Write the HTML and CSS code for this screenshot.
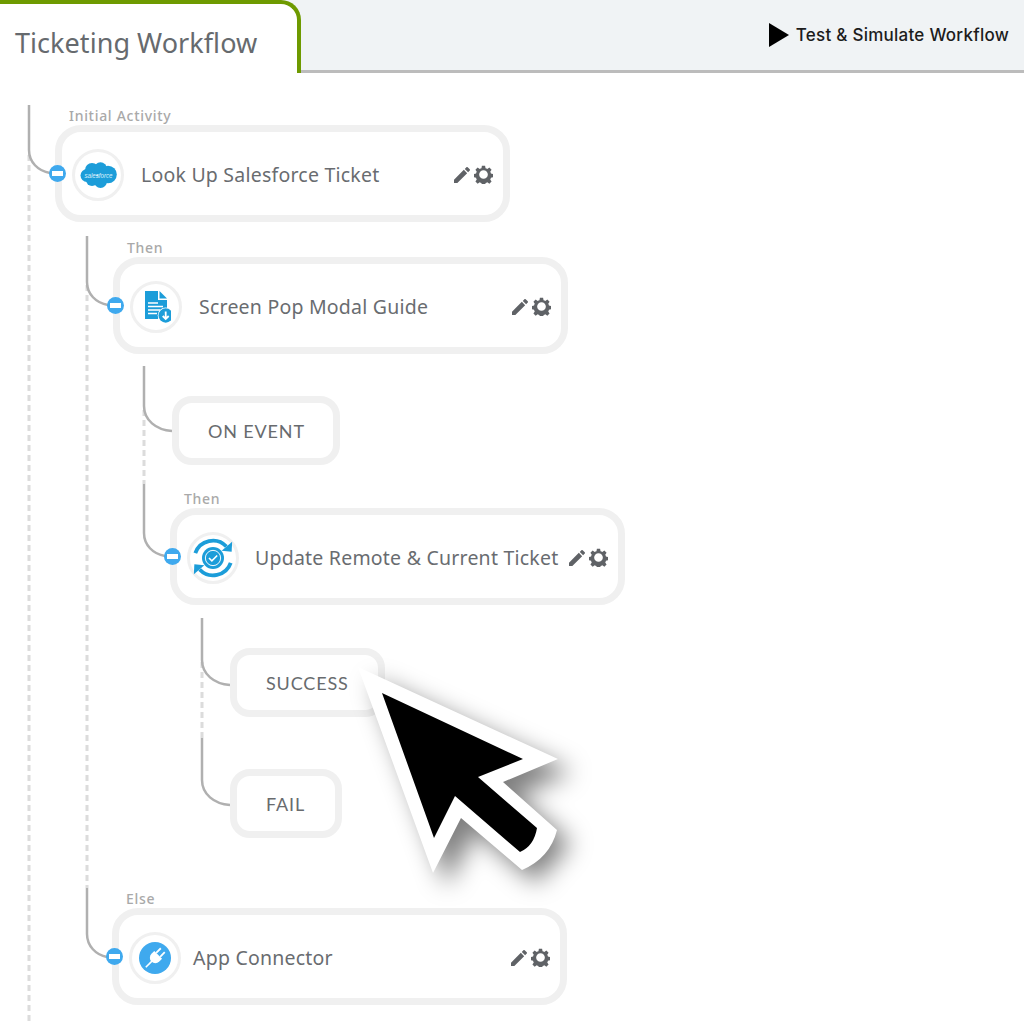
FILE: index.html
```html
<!DOCTYPE html>
<html lang="en">
<head>
<meta charset="utf-8">
<title>Ticketing Workflow</title>
<link rel="stylesheet" href="styles.css">
</head>
<body>
<div class="page">
  <header class="topbar">
    <div class="tab">Ticketing Workflow</div>
    <div class="test-action">
      <svg class="play" viewBox="0 0 20 24"><polygon points="0,0 20,12 0,24"/></svg>
      <span>Test &amp; Simulate Workflow</span>
    </div>
  </header>

  <main class="tree">
    <div class="step at-55">
      <div class="step-label">Initial Activity</div>
      <div class="node">
        <span class="minus"></span>
        <span class="icon-ring">
          <svg viewBox="0 0 37 26" class="icon-sf"><g fill="#1c9dd9"><circle cx="7" cy="13.500" r="6.500"/><circle cx="12" cy="8" r="7"/><circle cx="20.500" cy="6.800" r="6.500"/><circle cx="28" cy="12.500" r="8.800"/><circle cx="12" cy="18" r="6"/><circle cx="20.500" cy="19.500" r="6.500"/></g><text x="18.500" y="15.500" class="sf-word" text-anchor="middle" textLength="28" lengthAdjust="spacingAndGlyphs">salesforce</text></svg>
        </span>
        <span class="node-title">Look Up Salesforce Ticket</span>
        <span class="node-actions">
          <svg class="pencil" viewBox="3 3 18 18"><path d="M3 17.250V21h3.750L17.810 9.940l-3.750-3.750L3 17.250zM20.710 7.040a1 1 0 0 0 0-1.410l-2.340-2.340a1 1 0 0 0-1.410 0l-1.830 1.830 3.750 3.750 1.830-1.830z"/></svg>
          <svg class="gear" viewBox="0 0 24 24"><path fill-rule="evenodd" d="M10 1h4l.6 3a8.300 8.300 0 0 1 2.200.9l2.600-1.700 2.800 2.800-1.700 2.600c.4.700.7 1.400.9 2.200l3 .6v4l-3 .6a8.300 8.300 0 0 1-.9 2.200l1.700 2.600-2.800 2.800-2.600-1.700a8.300 8.300 0 0 1-2.200.9l-.6 3h-4l-.6-3a8.300 8.300 0 0 1-2.200-.9l-2.600 1.700-2.800-2.800 1.700-2.600a8.300 8.300 0 0 1-.9-2.200l-3-.6v-4l3-.6c.2-.8.500-1.500.9-2.200L1.800 6l2.800-2.800 2.600 1.700a8.300 8.300 0 0 1 2.200-.9zM12 6.500a5.500 5.500 0 1 0 0 11 5.500 5.500 0 0 0 0-11z"/></svg>
        </span>
      </div>
    </div>

    <div class="step at-113 gap-15">
      <div class="step-label">Then</div>
      <div class="node">
        <span class="minus"></span>
        <span class="icon-ring">
          <svg viewBox="-3 0 30 34" class="icon-doc"><path fill="#1c9dd9" d="M1 1h13v9h9v14a8 8 0 0 0-9 5H1z"/><path fill="#1c9dd9" d="M15.500 1l7.500 7.500h-7.500z"/><path fill="none" stroke="#fff" stroke-width="1.400" d="M4 13h10M4 16.500h15M4 20h12M4 23.500h9"/><circle cx="21.700" cy="25.500" r="8" fill="#fff"/><circle cx="21.700" cy="25.500" r="7.200" fill="#1c9dd9"/><path fill="none" stroke="#fff" stroke-width="1.800" d="M21.700 21.500v7M18.700 26l3 3 3-3"/></svg>
        </span>
        <span class="node-title">Screen Pop Modal Guide</span>
        <span class="node-actions">
          <svg class="pencil" viewBox="3 3 18 18"><path d="M3 17.250V21h3.750L17.810 9.940l-3.750-3.750L3 17.250zM20.710 7.040a1 1 0 0 0 0-1.410l-2.340-2.340a1 1 0 0 0-1.410 0l-1.830 1.830 3.750 3.750 1.830-1.830z"/></svg>
          <svg class="gear" viewBox="0 0 24 24"><path fill-rule="evenodd" d="M10 1h4l.6 3a8.300 8.300 0 0 1 2.200.9l2.600-1.700 2.800 2.800-1.700 2.600c.4.700.7 1.400.9 2.200l3 .6v4l-3 .6a8.300 8.300 0 0 1-.9 2.200l1.700 2.600-2.800 2.800-2.600-1.700a8.300 8.300 0 0 1-2.200.9l-.6 3h-4l-.6-3a8.300 8.300 0 0 1-2.200-.9l-2.600 1.700-2.800-2.800 1.700-2.600a8.300 8.300 0 0 1-.9-2.200l-3-.6v-4l3-.6c.2-.8.500-1.500.9-2.200L1.800 6l2.800-2.800 2.600 1.700a8.300 8.300 0 0 1 2.200-.9zM12 6.500a5.500 5.500 0 1 0 0 11 5.500 5.500 0 0 0 0-11z"/></svg>
        </span>
      </div>
    </div>

    <div class="branch branch-on-event gap-42">ON EVENT</div>

    <div class="step at-170 gap-23">
      <div class="step-label">Then</div>
      <div class="node node-snug">
        <span class="minus"></span>
        <span class="icon-ring">
          <svg viewBox="0 0 46 46" class="icon-sync">
            <path fill="none" stroke="#1c9dd9" stroke-width="4" d="M4.500 18A19.500 19.500 0 0 1 37 11"/>
            <path fill="#1c9dd9" d="M32 15.500l10.500 1 .5-10.500z"/>
            <path fill="none" stroke="#1c9dd9" stroke-width="4" d="M41.500 28A19.500 19.500 0 0 1 9 35"/>
            <path fill="#1c9dd9" d="M14 30.500l-10.500-1L3 40z"/>
            <circle cx="23" cy="23" r="11.500" fill="#1c9dd9"/>
            <circle cx="23" cy="23" r="8" fill="none" stroke="#fff" stroke-width="1"/>
            <path fill="none" stroke="#fff" stroke-width="1.600" d="M18.800 23l3 3 5.600-5.600"/>
          </svg>
        </span>
        <span class="node-title">Update Remote &amp; Current Ticket</span>
        <span class="node-actions">
          <svg class="pencil" viewBox="3 3 18 18"><path d="M3 17.250V21h3.750L17.810 9.940l-3.750-3.750L3 17.250zM20.710 7.040a1 1 0 0 0 0-1.410l-2.340-2.340a1 1 0 0 0-1.410 0l-1.830 1.830 3.750 3.750 1.830-1.830z"/></svg>
          <svg class="gear" viewBox="0 0 24 24"><path fill-rule="evenodd" d="M10 1h4l.6 3a8.300 8.300 0 0 1 2.200.9l2.600-1.700 2.800 2.800-1.700 2.600c.4.700.7 1.400.9 2.200l3 .6v4l-3 .6a8.300 8.300 0 0 1-.9 2.200l1.700 2.600-2.800 2.800-2.600-1.700a8.300 8.300 0 0 1-2.200.9l-.6 3h-4l-.6-3a8.300 8.300 0 0 1-2.200-.9l-2.600 1.700-2.800-2.800 1.700-2.600a8.300 8.300 0 0 1-.9-2.200l-3-.6v-4l3-.6c.2-.8.500-1.500.9-2.200L1.800 6l2.800-2.800 2.600 1.700a8.300 8.300 0 0 1 2.200-.9zM12 6.500a5.500 5.500 0 1 0 0 11 5.500 5.500 0 0 0 0-11z"/></svg>
        </span>
      </div>
    </div>

    <div class="branch branch-success gap-43">SUCCESS</div>
    <div class="branch branch-fail gap-52">FAIL</div>

    <div class="step at-112 gap-50">
      <div class="step-label">Else</div>
      <div class="node node-tight">
        <span class="minus"></span>
        <span class="icon-ring">
          <svg viewBox="0 0 32 32" class="icon-plug"><circle cx="16" cy="16" r="16" fill="#3fa9ee"/><g transform="rotate(45 16 16)" fill="#fff"><rect x="12.300" y="5" width="1.800" height="6.500"/><rect x="17.900" y="5" width="1.800" height="6.500"/><path d="M10.500 11.500h11v4a5.500 5.500 0 0 1-11 0z"/><rect x="15.200" y="20" width="1.600" height="9"/></g></svg>
        </span>
        <span class="node-title">App Connector</span>
        <span class="node-actions">
          <svg class="pencil" viewBox="3 3 18 18"><path d="M3 17.250V21h3.750L17.810 9.940l-3.750-3.750L3 17.250zM20.710 7.040a1 1 0 0 0 0-1.410l-2.340-2.340a1 1 0 0 0-1.410 0l-1.830 1.830 3.750 3.750 1.830-1.830z"/></svg>
          <svg class="gear" viewBox="0 0 24 24"><path fill-rule="evenodd" d="M10 1h4l.6 3a8.300 8.300 0 0 1 2.200.9l2.600-1.700 2.800 2.800-1.700 2.600c.4.700.7 1.400.9 2.200l3 .6v4l-3 .6a8.300 8.300 0 0 1-.9 2.200l1.700 2.600-2.800 2.800-2.600-1.700a8.300 8.300 0 0 1-2.200.9l-.6 3h-4l-.6-3a8.300 8.300 0 0 1-2.200-.9l-2.600 1.700-2.800-2.800 1.700-2.600a8.300 8.300 0 0 1-.9-2.200l-3-.6v-4l3-.6c.2-.8.500-1.500.9-2.200L1.800 6l2.800-2.800 2.600 1.700a8.300 8.300 0 0 1 2.200-.9zM12 6.500a5.500 5.500 0 1 0 0 11 5.500 5.500 0 0 0 0-11z"/></svg>
        </span>
      </div>
    </div>
  </main>

  <svg class="connectors" viewBox="0 0 1024 1024">
    <g class="dash">
      <path d="M29 155V1024"/>
      <path d="M87 285V888"/>
      <path d="M144 410V484"/>
      <path d="M202 662V738"/>
    </g>
    <g class="solid">
      <path d="M29 105V150C29 162 38 171 50 173"/>
      <path d="M87 236V282C87 294 96 303 108 305"/>
      <path d="M87 888V934C87 946 96 955 107 957"/>
      <path d="M144 366V406C144 420 156 430 172 431"/>
      <path d="M144 484V533C144 545 153 554 165 556"/>
      <path d="M202 618V660C202 674 214 684 230 685"/>
      <path d="M202 738V780C202 794 214 804 230 805"/>
    </g>
  </svg>

  <svg class="cursor" viewBox="0 0 1024 1024">
    <defs>
      <filter id="cursor-shadow" x="-30%" y="-30%" width="170%" height="170%">
        <feGaussianBlur stdDeviation="12"/>
      </filter>
    </defs>
    <polygon class="cursor-shadow" filter="url(#cursor-shadow)" points="372,680 572,772 517,795 571,843 536,883 475,831 447,886"/>
    <path class="cursor-edge" d="M358 667L558 759 503 782 557 830Q550 858 522 870L461 818 433 873Z"/>
    <path class="cursor-body" d="M382 693L523 759 478 777 537 828Q534 846 520 852L455 796 434 838Z"/>
  </svg>
</div>
</body>
</html>
```

FILE: styles.css
```css
* { box-sizing: border-box; }
html, body { margin: 0; padding: 0; background: #fff; }
.page {
  position: relative;
  width: 1024px;
  height: 1024px;
  overflow: hidden;
  font-family: "Noto Sans", "Open Sans", sans-serif;
  color: #63666a;
}
.topbar {
  height: 73px;
  display: flex;
  justify-content: space-between;
  align-items: stretch;
  background: #f0f3f5;
  border-bottom: 3px solid #bcbcbc;
}
.tab {
  width: 301px;
  height: 73px;
  padding: 24px 0 0 15px;
  background: #fff;
  border: solid #6e9a00;
  border-width: 4px 4px 0 0;
  border-top-right-radius: 20px;
  font-size: 27px;
  line-height: 30px;
  letter-spacing: 0.05px;
  color: #666a6e;
}
.test-action {
  display: flex;
  align-items: center;
  gap: 7px;
  height: 70px;
  padding-right: 15px;
  font-family: Inter, "Liberation Sans", sans-serif;
  font-size: 17px;
  font-weight: 500;
  letter-spacing: 0.25px;
  color: #1c1c1c;
}
.play { width: 20px; height: 24px; fill: #000; }

.tree {
  position: relative;
  z-index: 1;
  display: flex;
  flex-direction: column;
  align-items: flex-start;
  padding-top: 32px;
}
.step { width: 455px; }
.at-55 { margin-left: 55px; }
.at-113 { margin-left: 113px; }
.at-170 { margin-left: 170px; }
.at-112 { margin-left: 112px; }
.gap-15 { margin-top: 15px; }
.gap-23 { margin-top: 23px; }
.gap-42 { margin-top: 42px; }
.gap-43 { margin-top: 43px; }
.gap-50 { margin-top: 50px; }
.gap-52 { margin-top: 52px; }
.step-label {
  height: 20px;
  padding-left: 14px;
  font-size: 14px;
  font-weight: 500;
  line-height: 21px;
  letter-spacing: 0.7px;
  color: #a9a9a9;
}
.node {
  position: relative;
  display: flex;
  align-items: center;
  height: 97px;
  padding: 2px 10px 0;
  background: #fff;
  border: 7px solid #f0f0f0;
  border-radius: 26px;
}
.minus {
  position: absolute;
  left: -13px;
  top: 33px;
  width: 17px;
  height: 17px;
  border-radius: 50%;
  background: #3fa9ee;
}
.minus::after {
  content: "";
  position: absolute;
  left: 3px;
  top: 6px;
  width: 11px;
  height: 5px;
  background: #fff;
}
.icon-ring {
  flex: none;
  display: flex;
  align-items: center;
  justify-content: center;
  width: 52px;
  height: 52px;
  border: 3px solid #f0f0f0;
  border-radius: 50%;
  background: #fff;
}
.icon-sf { width: 37px; height: 26px; overflow: visible; }
.sf-word { font-family: "Liberation Sans", sans-serif; font-style: italic; font-size: 8px; fill: #d9f0fb; }
.icon-doc { flex: none; width: 30px; height: 34px; }
.icon-sync { flex: none; width: 44px; height: 44px; }
.icon-plug { flex: none; width: 32px; height: 32px; }
.node-title {
  flex: 1;
  margin-left: 17px;
  font-size: 19.500px;
  line-height: 26px;
  letter-spacing: 0.22px;
  white-space: nowrap;
  color: #696c70;
}
.node-snug .node-title { margin-left: 16px; }
.node-tight .node-title { margin-left: 12px; }
.node-actions {
  flex: none;
  display: flex;
  align-items: center;
  gap: 4px;
}
.pencil { width: 16px; height: 16px; fill: #5f6266; }
.gear { width: 19px; height: 19px; fill: #5f6266; }

.branch {
  display: flex;
  align-items: center;
  height: 69px;
  padding-left: 29px;
  background: #fff;
  border: 7px solid #f0f0f0;
  border-radius: 20px;
  font-family: Lato, "Noto Sans", sans-serif;
  font-size: 18px;
  letter-spacing: 0.85px;
  color: #686b6e;
}
.branch-on-event { width: 168px; margin-left: 172px; }
.branch-success { width: 155px; margin-left: 230px; }
.branch-fail { width: 112px; margin-left: 230px; }

.connectors, .cursor {
  position: absolute;
  left: 0;
  top: 0;
  width: 1024px;
  height: 1024px;
  pointer-events: none;
}
.connectors { z-index: 0; }
.dash path { fill: none; stroke: #dcdcdc; stroke-width: 3; stroke-dasharray: 6 4; }
.solid path { fill: none; stroke: #b0b0b0; stroke-width: 2.500; }
.cursor { z-index: 2; }
.cursor-shadow { fill: rgba(0, 0, 0, 0.5); }
.cursor-edge { fill: #fff; }
.cursor-body { fill: #000; }
```
